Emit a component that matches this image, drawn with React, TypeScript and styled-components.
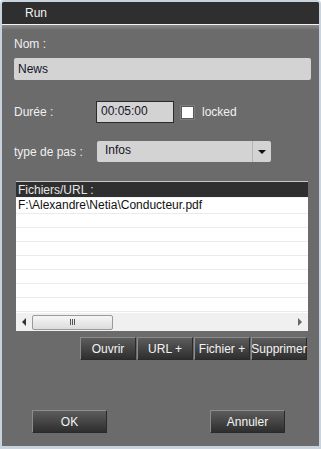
import React from "react";
import styled, { createGlobalStyle } from "styled-components";

const GlobalStyle = createGlobalStyle`
  html, body {
    margin: 0;
    padding: 0;
    background: #ffffff;
  }
  * {
    box-sizing: border-box;
  }
`;

const Window = styled.div`
  width: 321px;
  height: 449px;
  border: 2px solid #c9d3de;
  border-bottom-width: 3px;
  border-radius: 4px 4px 0 0;
  background: #6b6b6b;
  display: flex;
  flex-direction: column;
  font-family: "Liberation Sans", Arial, sans-serif;
  font-size: 12px;
  color: #f2f2f2;
  overflow: hidden;
`;

const TitleBar = styled.div`
  height: 23px;
  flex: none;
  background: #2f2f2f;
  border-bottom: 1px solid #f4f4f4;
  padding-left: 23px;
  display: flex;
  align-items: center;
  color: #f4f4f4;
`;

const Body = styled.div`
  flex: 1;
  padding: 0 9px 0 12px;
  display: flex;
  flex-direction: column;
  background: linear-gradient(#8a8a8a 0px, #7a7a7a 3px, #6b6b6b 5px, #6b6b6b 100%);
`;

const Label = styled.div<{ $width?: number }>`
  width: ${(p) => (p.$width ? `${p.$width}px` : "auto")};
  flex: none;
  line-height: 14px;
  color: #f0f0f0;
`;

const NameLabel = styled(Label)`
  margin-top: 12px;
`;

const NameField = styled.div`
  margin-top: 7px;
  height: 22px;
  flex: none;
  width: 297px;
  background: #d3d3d3;
  border-radius: 2px;
  color: #14142a;
  padding-left: 4px;
  display: flex;
  align-items: center;
`;

const Row = styled.div<{ $top: number; $height: number }>`
  margin-top: ${(p) => p.$top}px;
  height: ${(p) => p.$height}px;
  flex: none;
  display: flex;
  align-items: center;
`;

const TimeField = styled.div`
  width: 78px;
  height: 22px;
  border: 1px solid #2a2a2a;
  background: #d3d3d3;
  color: #14142a;
  padding: 2px 0 0 4px;
`;

const CheckBox = styled.div`
  width: 13px;
  height: 13px;
  margin-left: 7px;
  background: #ffffff;
  border: 1px solid #5a5a5a;
  outline: 1px solid #7d7d7d;
`;

const CheckLabel = styled.span`
  margin-left: 8px;
  color: #f2f2f2;
`;

const Select = styled.div`
  width: 174px;
  height: 21px;
  margin-left: 1px;
  background: #d3d3d3;
  border-radius: 2px;
  color: #14142a;
  display: flex;
  align-items: stretch;
`;

const SelectValue = styled.div`
  flex: 1;
  padding: 2px 0 0 8px;
  border-right: 1px solid #b4b4b4;
`;

const SelectArrow = styled.div`
  width: 18px;
  display: flex;
  align-items: center;
  justify-content: center;
`;

const List = styled.div`
  margin-top: 19px;
  width: 292px;
  height: 150px;
  flex: none;
  margin-left: 2px;
  background: #ffffff;
  border-top: 1px solid #c8c8c8;
  display: flex;
  flex-direction: column;
  overflow: hidden;
`;

const ListHeader = styled.div`
  height: 16px;
  flex: none;
  background: #2f2f2f;
  color: #e6e6e6;
  padding-left: 2px;
  line-height: 16px;
  border-bottom: 1px solid #f4f4f4;
`;

const ListRow = styled.div`
  height: 14px;
  flex: none;
  border-bottom: 1px solid #ebebeb;
  color: #111111;
  line-height: 13px;
  padding-left: 2px;
`;

const FirstRow = styled(ListRow)`
  height: 16px;
  line-height: 15px;
`;

const ScrollBar = styled.div`
  margin-top: auto;
  height: 18px;
  flex: none;
  background: #f0f0f0;
  display: flex;
  align-items: center;
  padding: 0 6px 0 6px;
`;

const ScrollThumb = styled.div`
  width: 81px;
  height: 15px;
  margin-left: 6px;
  border: 1px solid #9a9a9a;
  border-radius: 2px;
  background: linear-gradient(#f6f6f6, #dcdcdc);
  display: flex;
  align-items: center;
  justify-content: center;
  gap: 1px;
`;

const Grip = styled.span`
  width: 1px;
  height: 6px;
  background: #555555;
`;

const ScrollSpacer = styled.div`
  flex: 1;
`;

const ButtonRow = styled.div`
  margin-top: 6px;
  width: 293px;
  flex: none;
  display: flex;
  justify-content: flex-end;
  gap: 1px;
`;

const DarkButton = styled.div<{ $width: number; $height: number }>`
  width: ${(p) => p.$width}px;
  height: ${(p) => p.$height}px;
  flex: none;
  background: linear-gradient(#5c5c5c, #4a4a4a 40%, #2e2e2e);
  border: 1px solid #2a2a2a;
  border-top-color: #8c8c8c;
  border-left-color: #8c8c8c;
  color: #f4f4f4;
  display: flex;
  align-items: center;
  justify-content: center;
  white-space: nowrap;
`;

const FooterRow = styled.div`
  margin-top: 50px;
  padding: 0 25px 0 18px;
  display: flex;
  justify-content: space-between;
`;

const Arrow: React.FC<{ dir: "left" | "right" | "down"; color?: string }> = ({ dir, color = "#333" }) => {
  const pts =
    dir === "left" ? "4,0 4,8 0,4" : dir === "right" ? "0,0 0,8 4,4" : "0,0 8,0 4,4";
  const w = dir === "down" ? 8 : 4;
  const h = dir === "down" ? 4 : 8;
  return (
    <svg width={w} height={h} viewBox={`0 0 ${w} ${h}`}>
      <polygon points={pts} fill={color} />
    </svg>
  );
};

export default function App() {
  const emptyRows = Array.from({ length: 7 });
  return (
    <>
      <GlobalStyle />
      <Window>
        <TitleBar>Run</TitleBar>
        <Body>
          <NameLabel>Nom :</NameLabel>
          <NameField>News</NameField>

          <Row $top={21} $height={22}>
            <Label $width={82}>Durée :</Label>
            <TimeField>00:05:00</TimeField>
            <CheckBox />
            <CheckLabel>locked</CheckLabel>
          </Row>

          <Row $top={18} $height={21}>
            <Label $width={82}>type de pas :</Label>
            <Select>
              <SelectValue>Infos</SelectValue>
              <SelectArrow>
                <Arrow dir="down" color="#111" />
              </SelectArrow>
            </Select>
          </Row>

          <List>
            <ListHeader>Fichiers/URL :</ListHeader>
            <FirstRow>F:\Alexandre\Netia\Conducteur.pdf</FirstRow>
            {emptyRows.map((_, i) => (
              <ListRow key={i} />
            ))}
            <ScrollBar>
              <Arrow dir="left" />
              <ScrollThumb>
                <Grip />
                <Grip />
                <Grip />
              </ScrollThumb>
              <ScrollSpacer />
              <Arrow dir="right" color="#666" />
            </ScrollBar>
          </List>

          <ButtonRow>
            <DarkButton $width={56} $height={23}>Ouvrir</DarkButton>
            <DarkButton $width={56} $height={23}>URL +</DarkButton>
            <DarkButton $width={56} $height={23}>Fichier +</DarkButton>
            <DarkButton $width={56} $height={23}>Supprimer</DarkButton>
          </ButtonRow>

          <FooterRow>
            <DarkButton $width={75} $height={23}>OK</DarkButton>
            <DarkButton $width={75} $height={23}>Annuler</DarkButton>
          </FooterRow>
        </Body>
      </Window>
    </>
  );
}
